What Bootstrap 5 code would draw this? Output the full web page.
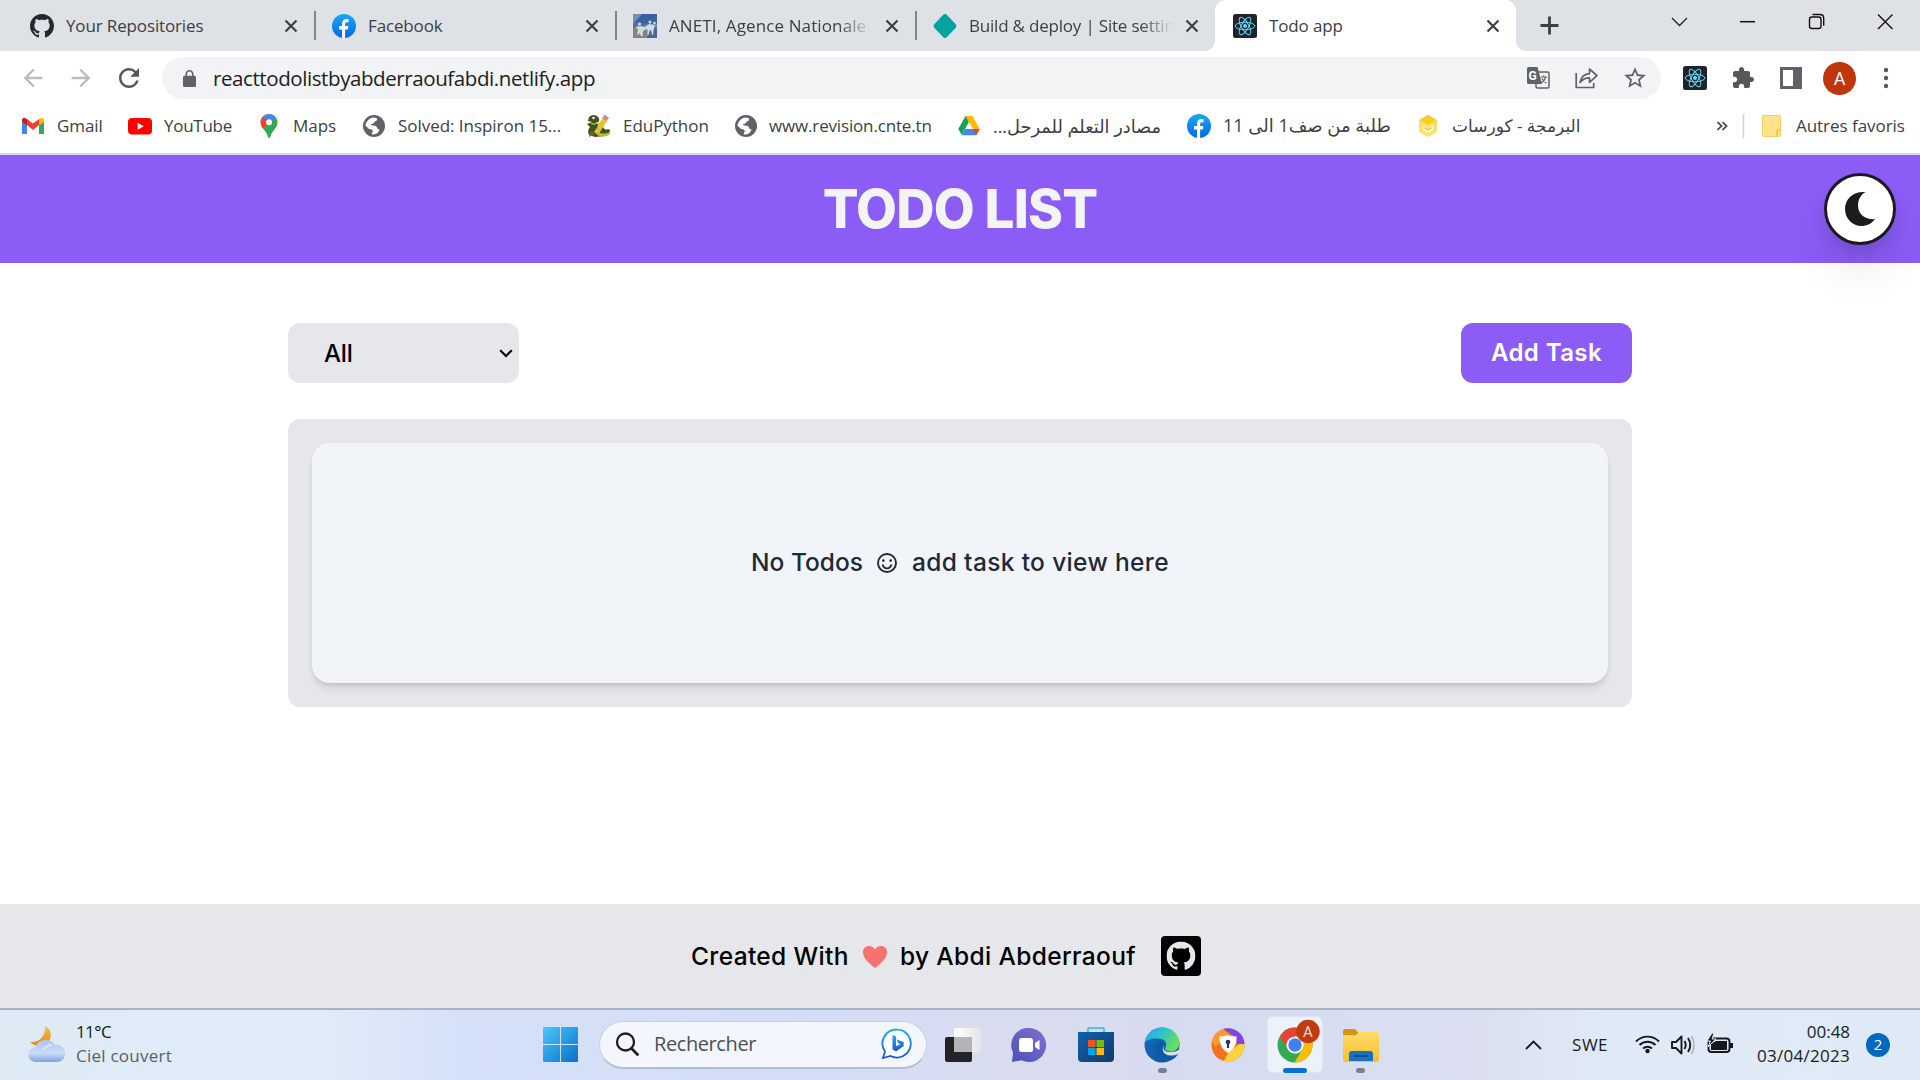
<!DOCTYPE html>
<html lang="en">
<head>
<meta charset="utf-8">
<title>Todo app</title>
<link href="https://cdn.jsdelivr.net/npm/bootstrap@5.3.0/dist/css/bootstrap.min.css" rel="stylesheet">
<style>
body{width:1920px;height:1080px;overflow:hidden;background:#fff;font-family:"Open Sans","DejaVu Sans",sans-serif;color:#3c4043}
svg{display:block;flex:none}
.txt{white-space:nowrap;line-height:1;display:block;flex:none}
/* tab strip */
.tabs{height:51px;background:#dee1e6}
.tab{height:51px;width:301px;padding-left:16px;font-size:17px;flex:none}
.tab .txt{margin-left:12px}
.tab-first{width:316px;padding-left:30px}
.tab-mid{width:300px}
.tab-last{width:298px}
.tab:not(.tab-active):not(.tab-last)::after{content:"";width:2px;height:29px;background:#82868b;flex:none}
.tab-name{flex:none;width:208px}
.tab-name .txt{line-height:1.4;letter-spacing:-.14px}
.tab-x{margin-left:auto;margin-right:16px}
.fade-end{overflow:hidden;width:202px;-webkit-mask-image:linear-gradient(90deg,#000 84%,transparent);mask-image:linear-gradient(90deg,#000 84%,transparent)}
.tab-name .ls-wide{letter-spacing:.12px}
.tab-name .ls-tight{letter-spacing:-.2px;width:204px}
.tab-active{background:#fff;border-radius:11px 11px 0 0;width:301px;padding-left:18px;position:relative}
.tab-active::before,.tab-active::after{content:"";position:absolute;bottom:0;width:10px;height:10px}
.tab-active::before{left:-10px;background:radial-gradient(circle at 0 0,transparent 9.5px,#fff 10px)}
.tab-active::after{right:-10px;background:radial-gradient(circle at 100% 0,transparent 9.5px,#fff 10px)}
.win{width:68.6px;height:44px}
/* toolbar */
.toolbar{height:53px;background:#fff;padding:1px 0 0 9px}
.navbtn{width:48px;flex:none}
.pill{width:1499px;height:42px;border-radius:21px;background:#f1f3f4;margin-left:9px;padding:0 14px 0 21px;flex:none}
.url{font-size:20.5px;color:#202124;margin-left:17px;letter-spacing:-.41px}
.pill-icons{gap:25px}
.tools{padding-left:18px}
.toolic{width:48px;flex:none}
.avatar{width:33px;height:33px;background:#bf360c;color:#fff;font:18px Roboto,sans-serif}
.kebab{margin-left:15px}
/* bookmarks */
.marks{height:49px;padding-left:21px;font-size:17px;padding-bottom:5px}
.mark-item{flex:none;gap:12px;letter-spacing:-.04px}
.w1{width:107px;letter-spacing:-.1px}.w2{width:129px;letter-spacing:-.27px}.w3{width:105px}.w4{width:225px}.w5{width:146px}.w6{width:224px;letter-spacing:-.16px}
.w7{width:230px;font-size:17.8px;letter-spacing:0}.w8{width:229px;font-size:18px;letter-spacing:0}.w9{width:301px;letter-spacing:0}
.mark-item .txt{line-height:1.4}
/* page */
.pagehead{height:110px;background:#8b5cf6;border-top:2px solid #e0d2fb}
.poppy{font-family:Inter,sans-serif}
.title{font-weight:800;font-size:53px;letter-spacing:-.8px;color:#f3f4f6}
.moon{width:72px;height:72px;border:3px solid #1b1a22;background:#fff;right:24px;top:18px;box-shadow:0 30px 46px -6px rgba(0,0,0,.1),0 10px 18px -4px rgba(0,0,0,.13)}
.stage{height:641px;padding:60px 288px 0}
.pick{width:231px;height:60px;border-radius:12px;background:#e5e7eb;color:#000;font-size:24px;font-weight:500;letter-spacing:-.2px;padding:1px 6px 0 36px}
.addbtn,.addbtn:hover{width:171px;height:60px;border-radius:12px;background:#8b5cf6;color:#fff;font-size:24px;font-weight:600;letter-spacing:.4px;border:0}
.board{margin-top:36px;height:288px;border-radius:12px;background:#e5e7eb;padding:24px}
.empty{height:240px;border-radius:18px;background:#f1f4f9;color:#1f2937;font-size:24.500px;font-weight:500;box-shadow:0 6px 9px -2px rgba(0,0,0,.13),0 2px 5px -2px rgba(0,0,0,.1);padding-bottom:1px}
.view-text{letter-spacing:.35px}
.smile{margin:0 15px 0 14px}
.foot{height:106px;background:#e5e7eb;border-bottom:2px solid #a9b3c1;color:#000;font-size:24.500px;font-weight:500;padding-left:691px;letter-spacing:.35px}
.foot-a{width:160px}.foot-b{width:236px}
.heart{margin:2px 13px 0 12px}
.ghbox{margin-left:25px}
/* taskbar */
.taskbar{height:70px;background:linear-gradient(90deg,#deebf5 0,#e0ebf8 17%,#d5e1f8 24%,#d3def6 42%,#dadbee 55%,#d6dcf1 66%,#dbdff0 77%,#e0eaf7 84%,#deebf6 100%);color:#1a1c20;font-size:17px;padding-bottom:1px}
.wx{margin-left:28px}
.wtext{margin-left:8px;width:467px;flex:none;padding-bottom:2px}
.two-line .txt+.txt{margin-top:7px}
.wtext .t-temp{letter-spacing:-.6px}
.wtext .t-sky{color:#5a5f66;letter-spacing:.24px}
.search{width:328px;height:48px;border-radius:24px;background:#f3f7fd;border:1px solid #c6d0e2;border-bottom:2px solid #b3bed1;font-size:20px;color:#4c5057;padding:0 13px 0 15px;margin-left:21px;flex:none}
.search .txt{margin-left:15px;letter-spacing:-.41px}
.apps{margin-left:3px;flex:none}
.app{width:66.300px;height:70px;flex:none;position:relative}
.app .dot{position:absolute;bottom:7px;width:9px;height:5px;border-radius:3px;background:#7d808c}
.tile{width:56px;height:57px;border-radius:6px;background:#edf1fa;border:1px solid #dfe4f1}
.app .dot-on{width:24px;background:#0b70cc}
.up{margin-left:131px}
.t-swe{margin-left:30px;width:36px;letter-spacing:.5px}
.tray{margin-left:27px}
.clock{width:93px;margin-left:22px;padding-bottom:2px;flex:none}
.t-date{letter-spacing:.28px}
.notif{width:24px;height:24px;background:#0467c0;color:#fff;font-size:15px;margin-left:16px;flex:none}
</style>
<script src="https://cdn.jsdelivr.net/npm/bootstrap@5.3.0/dist/js/bootstrap.bundle.min.js"></script>
</head>
<body>
<svg width="0" height="0" class="position-absolute">
<defs>
<linearGradient id="fbg" x2="0" y2="1"><stop stop-color="#18a9fb"/><stop offset="1" stop-color="#0668e1"/></linearGradient>
<linearGradient id="wing" x2="1" y2="1"><stop stop-color="#4cc6f8"/><stop offset="1" stop-color="#0671cc"/></linearGradient>
<linearGradient id="cloud" x2="0" y2="1"><stop stop-color="#a9c5f0"/><stop offset=".6" stop-color="#c9dcf6"/><stop offset="1" stop-color="#7fa4e2"/></linearGradient>
<linearGradient id="sun" x2="0" y2="1"><stop stop-color="#f6c33d"/><stop offset="1" stop-color="#e8842a"/></linearGradient>
<linearGradient id="chat" x1="1" x2="0" y2="1"><stop stop-color="#8a6ad0"/><stop offset=".5" stop-color="#6463c6"/><stop offset="1" stop-color="#4c4fb4"/></linearGradient>
<linearGradient id="store" x2="1" y2="1"><stop stop-color="#0f62ac"/><stop offset="1" stop-color="#123a6c"/></linearGradient>
<linearGradient id="e1" x2="1" y2=".4"><stop stop-color="#2aa6e3"/><stop offset=".5" stop-color="#2cc3cf"/><stop offset="1" stop-color="#6bdc5b"/></linearGradient>
<linearGradient id="e2" x2="1" y2="1"><stop stop-color="#1470c4"/><stop offset="1" stop-color="#0c4f98"/></linearGradient>
<linearGradient id="fold" x2="0" y2="1"><stop stop-color="#ffdc6b"/><stop offset="1" stop-color="#f7bf2c"/></linearGradient>
<linearGradient id="bing" x2="0" y2="1"><stop stop-color="#2aa8ee"/><stop offset="1" stop-color="#1a55c8"/></linearGradient>
<linearGradient id="glass" x2="1"><stop stop-color="#fff"/><stop offset="1" stop-color="#e4e4e6"/></linearGradient>
<symbol id="gh" viewBox="0 0 16 16"><path d="M8 0C3.58 0 0 3.58 0 8c0 3.54 2.29 6.53 5.47 7.59.4.07.55-.17.55-.38 0-.19-.01-.82-.01-1.49-2.01.37-2.53-.49-2.69-.94-.09-.23-.48-.94-.82-1.13-.28-.15-.68-.52-.01-.53.63-.01 1.08.58 1.23.82.72 1.21 1.87.87 2.33.66.07-.52.28-.87.51-1.07-1.78-.2-3.64-.89-3.64-3.95 0-.87.31-1.59.82-2.15-.08-.2-.36-1.02.08-2.12 0 0 .67-.21 2.2.82.64-.18 1.32-.27 2-.27.68 0 1.36.09 2 .27 1.53-1.04 2.2-.82 2.2-.82.44 1.1.16 1.92.08 2.12.51.56.82 1.27.82 2.15 0 3.07-1.87 3.75-3.65 3.95.29.25.54.73.54 1.48 0 1.07-.01 1.93-.01 2.2 0 .21.15.46.55.38A8.012 8.012 0 0 0 16 8c0-4.42-3.58-8-8-8z"/></symbol>
<symbol id="fb" viewBox="0 0 24 24"><circle cx="12" cy="12" r="12" fill="url(#fbg)"/><path d="M10 24v-8.400H7V12h3V9.700C10 6.700 11.800 5 14.500 5c1 0 2 .2 2 .2v3H15c-1.500 0-1.900.9-1.900 1.900V12h3.300l-.6 3.600h-2.700V24z" fill="#fff"/></symbol>
<symbol id="close" viewBox="0 0 14 14"><path d="M1.500 1.500l11 11M12.500 1.500l-11 11" stroke="#3c4043" stroke-width="2.200"/></symbol>
<symbol id="react" viewBox="0 0 24 24"><rect width="24" height="24" rx="2.500" fill="#20232a"/><g fill="none" stroke="#61dafb" stroke-width=".95"><ellipse cx="12" cy="12" rx="9.800" ry="3.700"/><ellipse cx="12" cy="12" rx="9.800" ry="3.700" transform="rotate(60 12 12)"/><ellipse cx="12" cy="12" rx="9.800" ry="3.700" transform="rotate(120 12 12)"/></g><circle cx="12" cy="12" r="2" fill="#61dafb"/></symbol>
<symbol id="globe" viewBox="0 0 24 24"><circle cx="12" cy="12" r="11" fill="#5f6368"/><path d="M3.500 12C4 7.500 7 4 11.500 3.500L15 4.300c.3 2-.6 3.200-2.500 3.500-.6 1.600-1.800 2.300-3.500 2.300-.4 1.300 1 1.600 3.500 1.700 2 .2 2.800 1.500 2.500 2.700 2.300.4 3 1.300 2 2.500-1.500 2.600-4.300 4-7 3.500-.5-1.400.2-2.300 1-3-.3-1.700-1.500-2.200-3-2.200C6 14.800 5.500 12.600 3.500 12z" fill="#fff"/></symbol>
</defs>
</svg>

<header>
<div class="tabs d-flex">
  <div class="tab tab-first d-flex align-items-center">
    <svg width="24" height="24" fill="#24292f"><use href="#gh"/></svg>
    <div class="tab-name"><span class="txt">Your Repositories</span></div>
    <svg width="14" height="14" class="tab-x"><use href="#close"/></svg>
  </div>
  <div class="tab d-flex align-items-center">
    <svg width="24" height="24"><use href="#fb"/></svg>
    <div class="tab-name"><span class="txt">Facebook</span></div>
    <svg width="14" height="14" class="tab-x"><use href="#close"/></svg>
  </div>
  <div class="tab tab-mid d-flex align-items-center">
    <svg width="24" height="24"><rect width="24" height="24" fill="#4d6f9f"/><path d="M0 0h24v10L0 8z" fill="#3b62a0"/><path d="M0 0h9L0 10z" fill="#7590b4"/><path d="M0 24V14l5-3 4 3 5-4 4 3 6-4v15z" fill="#85857c"/><path d="M14 24l2-8 8-3v11z" fill="#4a6797"/><g fill="#cfdbe6"><circle cx="6.500" cy="10" r="1.600"/><circle cx="17" cy="8" r="1.500"/><circle cx="21.500" cy="9" r="1.300"/><path d="M3 13l5-1 4 1 4-3 6 1-1 3-1 7h-1l-1-5-1.500 1-1 4h-1l0-6-3.500 1-1.500 3 .5 3H8l-1.500-3L5 21H4l1-5z"/></g></svg>
    <div class="tab-name"><span class="txt fade-end ls-wide">ANETI, Agence Nationale</span></div>
    <svg width="14" height="14" class="tab-x"><use href="#close"/></svg>
  </div>
  <div class="tab tab-last d-flex align-items-center">
    <svg width="24" height="24"><path d="M12 0c1 0 1.500.5 2.200 1.300l8.600 9c.7.900.7 2.500 0 3.400l-8.600 9c-1.200 1.600-3.200 1.600-4.400 0l-8.600-9c-.7-.9-.7-2.500 0-3.400l8.600-9C10.500.5 11 0 12 0z" fill="#05a3a0"/></svg>
    <div class="tab-name"><span class="txt fade-end ls-tight">Build &amp; deploy | Site settin</span></div>
    <svg width="14" height="14" class="tab-x"><use href="#close"/></svg>
  </div>
  <div class="tab tab-active d-flex align-items-center">
    <svg width="24" height="24"><use href="#react"/></svg>
    <div class="tab-name"><span class="txt">Todo app</span></div>
    <svg width="14" height="14" class="tab-x me-3"><use href="#close"/></svg>
  </div>
  <svg width="66" height="51"><path d="M24.500 25.500h18M33.500 16.500v18" stroke="#3c4043" stroke-width="2.800"/></svg>
  <div class="d-flex ms-auto">
    <svg class="win"><path d="M26 18l7.500 7.500L41 18" fill="none" stroke="#222" stroke-width="1.300"/></svg>
    <svg class="win"><path d="M26 21.700h15" stroke="#111" stroke-width="1.500"/></svg>
    <svg class="win"><rect x="26.500" y="17" width="11.500" height="11.500" rx="2.300" fill="none" stroke="#111" stroke-width="1.400"/><path d="M29.500 14.500H37q3.700 0 3.700 3.700v7.500" fill="none" stroke="#111" stroke-width="1.400"/></svg>
    <svg class="win"><path d="M27 14.500l14.500 14.500M41.500 14.500L27 29" stroke="#111" stroke-width="1.400"/></svg>
  </div>
</div>

<div class="toolbar d-flex align-items-center">
  <div class="navbtn d-flex justify-content-center"><svg width="28" height="28" viewBox="0 0 24 24" fill="#b9bbbe"><path d="M20 11H7.830l5.590-5.590L12 4l-8 8 8 8 1.410-1.410L7.830 13H20v-2z"/></svg></div>
  <div class="navbtn d-flex justify-content-center"><svg width="28" height="28" viewBox="0 0 24 24" fill="#b9bbbe"><path d="M4 11h12.170l-5.590-5.590L12 4l8 8-8 8-1.410-1.410L16.170 13H4z"/></svg></div>
  <div class="navbtn d-flex justify-content-center"><svg width="30" height="30" viewBox="0 0 24 24" fill="#54585d"><path d="M17.650 6.350A7.958 7.958 0 0 0 12 4c-4.420 0-7.990 3.580-7.990 8s3.570 8 7.990 8c3.730 0 6.840-2.550 7.730-6h-2.080A5.990 5.990 0 0 1 12 18c-3.310 0-6-2.690-6-6s2.690-6 6-6c1.660 0 3.140.69 4.220 1.780L13 11h7V4l-2.350 2.350z"/></svg></div>
  <div class="pill d-flex align-items-center">
    <svg width="13" height="17" viewBox="4 1 16 21" preserveAspectRatio="none" fill="#5f6368"><path d="M18 8h-1V6c0-2.760-2.240-5-5-5S7 3.240 7 6v2H6c-1.100 0-2 .9-2 2v10c0 1.100.9 2 2 2h12c1.100 0 2-.9 2-2V10c0-1.100-.9-2-2-2zM9 6c0-1.660 1.340-3 3-3s3 1.340 3 3v2H9V6z"/></svg>
    <span class="txt url">reacttodolistbyabderraoufabdi.netlify.app</span>
    <div class="pill-icons d-flex align-items-center ms-auto">
      <svg width="23" height="22" class="overflow-visible"><rect x="10" y="5" width="13" height="16" rx="1.500" fill="none" stroke="#5f6368" stroke-width="1.500"/><path d="M2.500 0h9l4.500 17H2.500Q1 17 1 15.500v-14Q1 0 2.500 0z" fill="#5f6368"/><text x="2.500" y="12.500" font-family="Roboto" font-weight="700" font-size="12" fill="#fff">G</text><path d="M14.500 10h6.500M17.700 8.500V10M19.700 10q-1 4-4.500 6M16 11.500q1.500 3 4.500 4.500" stroke="#5f6368" stroke-width="1.200" fill="none"/></svg>
      <svg width="24" height="22" class="overflow-visible"><path d="M2.200 6v14.500h17.500V16M6 15.500C7 10 10.500 7 15.500 6.600V2l7.500 6.700-7.500 6.600v-4.400c-4 0-7 1.300-9.500 4.600z" fill="none" stroke="#5f6368" stroke-width="1.700" stroke-linejoin="round"/></svg>
      <svg width="24" height="26" viewBox="1 0 22 24" fill="#5f6368"><path d="M22 9.240l-7.190-.62L12 2 9.190 8.630 2 9.240l5.460 4.730L5.820 21 12 17.270 18.180 21l-1.630-7.030L22 9.240zM12 15.400l-3.760 2.270 1-4.280-3.320-2.880 4.380-.38L12 6.100l1.710 4.040 4.380.38-3.320 2.880 1 4.280L12 15.400z"/></svg>
    </div>
  </div>
  <div class="tools d-flex align-items-center">
    <div class="toolic d-flex"><svg width="24" height="24" class="ms-1"><use href="#react"/></svg></div>
    <div class="toolic d-flex"><svg width="24" height="24" viewBox="0 0 24 24" fill="#54585d" class="ms-1"><path d="M20.500 11H19V7c0-1.100-.9-2-2-2h-4V3.500C13 2.120 11.880 1 10.500 1S8 2.120 8 3.500V5H4c-1.100 0-1.990.9-1.990 2v3.800H3.500c1.490 0 2.700 1.210 2.700 2.700s-1.210 2.700-2.700 2.700H2V20c0 1.100.9 2 2 2h3.800v-1.500c0-1.490 1.210-2.700 2.700-2.700 1.490 0 2.700 1.210 2.700 2.700V22H17c1.100 0 2-.9 2-2v-4h1.500c1.380 0 2.500-1.120 2.500-2.500S21.880 11 20.500 11z"/></svg></div>
    <div class="toolic d-flex"><svg width="22" height="22" class="ms-1 overflow-visible"><path d="M2.500 1.500h19v19h-19z" fill="none" stroke="#5f6368" stroke-width="3"/><path d="M14 1h8v20h-8z" fill="#5f6368"/></svg></div>
    <div class="avatar rounded-circle d-flex align-items-center justify-content-center flex-shrink-0">A</div>
    <svg width="34" height="24" class="kebab"><g fill="#54585d"><circle cx="15" cy="4" r="2.200"/><circle cx="15" cy="12" r="2.200"/><circle cx="15" cy="20" r="2.200"/></g></svg>
  </div>
</div>

<div class="marks d-flex align-items-center">
  <div class="mark-item w1 d-flex align-items-center"><svg width="24" height="24"><path d="M1 20V6l5 4v10z" fill="#4285f4"/><path d="M18 20V10l5-4v14z" fill="#34a853"/><path d="M6 11V5l6 4.500L18 5v6l-6 5z" fill="#ea4335"/><path d="M1 8V6c0-2 2-3 3.500-1.800L6 5v6.500z" fill="#c5221f"/><path d="M23 8V6c0-2-2-3-3.500-1.800L18 5v6.500z" fill="#fbbc04"/></svg><span class="txt">Gmail</span></div>
  <div class="mark-item w2 d-flex align-items-center"><svg width="24" height="24"><rect y="4" width="24" height="16.500" rx="4" fill="#f00"/><path d="M9.700 8.700v7l6-3.500z" fill="#fff"/></svg><span class="txt">YouTube</span></div>
  <div class="mark-item w3 d-flex align-items-center"><svg width="24" height="24"><clipPath id="pin"><path d="M12 0c4.700 0 8.300 3.600 8.300 8.300 0 3.200-1.300 5-3.300 7.400-2 2.300-3.100 4-3.700 6.700-.3 1.700-2.300 1.700-2.600 0-.6-2.700-1.700-4.400-3.700-6.700C5 13.300 3.700 11.500 3.700 8.300 3.700 3.600 7.300 0 12 0z"/></clipPath><g clip-path="url(#pin)"><path d="M0 0h24v24H0z" fill="#34a853"/><path d="M3 17l9-8 7-8V0H3z" fill="#fbbc04"/><path d="M2 6l5-5 6 6-7 8-4-2z" fill="#ea4335"/><path d="M6 3l3-4 12 2-8 8z" fill="#4285f4"/><path d="M12 24V14l9-10v20z" fill="#34a853"/></g><circle cx="12" cy="8.300" r="3" fill="#fff"/></svg><span class="txt">Maps</span></div>
  <div class="mark-item w4 d-flex align-items-center"><svg width="24" height="24"><use href="#globe"/></svg><span class="txt">Solved: Inspiron 15...</span></div>
  <div class="mark-item w5 d-flex align-items-center"><svg width="24" height="24"><path d="M2 3q3-3 7-1.500Q13 3 12 7l-3 3q5-1 7 3 2 4 5 2l2 1-1 4-4 2-10 1-6-2q-2-5 1-8l-3-3 5-2-4-1z" fill="#40541c"/><path d="M6 17L16 4l4 3-9 14z" fill="#e8c52c"/><path d="M15 4l2.500-3.500L22 4l-2.500 3z" fill="#d9898d"/><path d="M2 23l2-6 4 3z" fill="#8a5a2c"/><path d="M11 18q5 3 12 0l-1 3q-6 3-12 0z" fill="#b8be34"/><path d="M4 9q4 3 6-1M9 13l3 3" stroke="#a7c048" stroke-width="1.500" fill="none"/><path d="M8 10l3 2-4 6-2-2z" fill="#40541c"/><circle cx="6.500" cy="4" r="1.200" fill="#fff"/></svg><span class="txt">EduPython</span></div>
  <div class="mark-item w6 d-flex align-items-center"><svg width="24" height="24" class="overflow-visible"><use href="#globe" x="1"/></svg><span class="txt">www.revision.cnte.tn</span></div>
  <div class="mark-item w7 d-flex align-items-center"><svg width="24" height="24"><path d="M8.500 2h7L8.500 14.500 4.800 21 1.300 15z" fill="#18a05d"/><path d="M8.500 2h7l7.200 13h-7.200z" fill="#fbbc04"/><path d="M8.300 15h14.400l-3.500 6.300H4.800z" fill="#4285f4"/><path d="M15.700 15h7l-3.500 6.300z" fill="#ea4335"/><path d="M12 8l4 7H8z" fill="#fff"/></svg><span class="txt" dir="rtl">مصادر التعلم للمرحل...</span></div>
  <div class="mark-item w8 d-flex align-items-center"><svg width="24" height="24"><use href="#fb"/></svg><span class="txt" dir="rtl">طلبة من صف1 الى 11</span></div>
  <div class="mark-item w9 d-flex align-items-center"><svg width="24" height="24"><path d="M12 1l9 5v12l-9 5-9-5V6z" fill="#fbe06a"/><path d="M12 1l9 5-9 5-9-5z" fill="#f9cb28"/><path d="M7 11l5 3 5-3v5l-5 3-5-3z" fill="#fffbe4"/><path d="M8.500 13.500L12 16l3.500-2.500" stroke="#f5c932" stroke-width="1.800" fill="none"/></svg><span class="txt" dir="rtl">البرمجة - كورسات</span></div>
  <svg width="43" height="24"><path d="M.5 8l4 4-4 4M5.500 8l4 4-4 4" fill="none" stroke="#3c4043" stroke-width="1.700"/><path d="M26.500 0v24" stroke="#cfd1d4" stroke-width="1.500"/></svg>
  <div class="mark-item d-flex align-items-center"><svg width="24" height="24"><path d="M4 1.500h15q1.500 0 1.500 1.500v18q0 1.500-1.500 1.500H4Q2.500 22.500 2.500 21V3q0-1.500 1.500-1.500z" fill="#ffe28a" stroke="#f3cf62"/><path d="M17 22v-5q0-1 1-1h2.500" fill="none" stroke="#e9bb3c" stroke-width="1.200"/></svg><span class="txt">Autres favoris</span></div>
</div>
</header>

<main class="poppy">
<div class="pagehead d-flex align-items-center justify-content-center position-relative">
  <h1 class="txt title m-0">TODO LIST</h1>
  <div class="moon rounded-circle position-absolute d-flex align-items-center justify-content-center"><svg width="32" height="36"><path d="M21.500 1C9 0 1 8 1 18s8 17 16 17c6 0 11-2.500 14-7-8 1-17-3.500-17-13.500C14 8.500 17 3.500 21.500 1z" fill="#1b1c1e"/></svg></div>
</div>
<div class="stage">
  <div class="d-flex justify-content-between">
    <div class="pick d-flex align-items-center justify-content-between"><span class="txt">All</span><svg width="14" height="9"><path d="M1.200 1.200L7 7l5.800-5.800" fill="none" stroke="#000" stroke-width="2.200"/></svg></div>
    <button class="btn addbtn d-flex align-items-center justify-content-center p-0"><span class="txt">Add Task</span></button>
  </div>
  <div class="board"><div class="empty d-flex align-items-center justify-content-center">
    <span class="txt">No Todos</span>
    <svg width="20" height="20" class="smile"><circle cx="10" cy="10" r="9" fill="none" stroke="#1f2937" stroke-width="1.900"/><circle cx="6.300" cy="7.600" r="1.300" fill="#1f2937"/><circle cx="13.700" cy="7.600" r="1.300" fill="#1f2937"/><path d="M5.500 11.500q1 3.800 4.500 3.800t4.500-3.800" fill="none" stroke="#1f2937" stroke-width="1.800"/></svg>
    <span class="txt view-text">add task to view here</span>
  </div></div>
</div>
<footer class="foot d-flex align-items-center">
  <span class="txt foot-a">Created With</span>
  <svg width="24" height="24" class="heart"><path d="M12 23C5 17.500 0 13 0 7 0 3.500 2.500 1 6 1c2.500 0 4.800 1.300 6 3.500C13.200 2.300 15.500 1 18 1c3.500 0 6 2.500 6 6 0 6-5 10.500-12 16z" fill="#f87171"/></svg>
  <span class="txt foot-b">by Abdi Abderraouf</span>
  <svg width="40" height="40" class="ghbox"><rect width="40" height="40" rx="4" fill="#000"/><use href="#gh" x="5.500" y="5.500" width="29" height="29" fill="#e5e7eb"/></svg>
</footer>
</main>

<div class="taskbar d-flex align-items-center">
  <svg width="40" height="40" class="wx"><path d="M17 1c7 3 8 12 2 17-5 4-12 4-17-1 8 1 16-5 15-16z" fill="url(#sun)"/><path d="M8 37a7.500 7.500 0 0 1-.5-15A11 11 0 0 1 27 20a8.500 8.500 0 0 1 3 17z" fill="url(#cloud)"/><path d="M16 25q2-5 8-5" stroke="#e3eefc" stroke-width="1.500" fill="none"/></svg>
  <div class="wtext two-line"><span class="txt t-temp">11°C</span><span class="txt t-sky">Ciel couvert</span></div>
  <svg width="35" height="36"><path d="M1 0h16v17H0V1q0-1 1-1zM18 0h16q1 0 1 1v16H18zM0 18h17v17H1q-1 0-1-1zM18 18h17v16q0 1-1 1H18z" fill="url(#wing)"/></svg>
  <div class="search d-flex align-items-center">
    <svg width="24" height="24"><circle cx="10.500" cy="10" r="8.500" fill="none" stroke="#1d1d1f" stroke-width="2.300"/><path d="M16.500 16.500l6 6" stroke="#1d1d1f" stroke-width="2.800" stroke-linecap="round"/></svg>
    <span class="txt">Rechercher</span>
    <svg width="32" height="32" class="ms-auto"><path d="M16 1.500a14 14 0 1 1-6.500 26.500L2 30l2-6.500A14 14 0 0 1 16 1.500z" fill="#f7fbff" stroke="url(#bing)" stroke-width="1.800"/><path d="M11.500 7l3.500 1.300v10l4.500-2-2.500-1.300-1.300-3.500 7 2.600v3.800L15 23.500l-3.500-2.200z" fill="url(#bing)"/></svg>
  </div>
  <div class="apps d-flex align-items-center">
    <div class="app d-flex align-items-center justify-content-center"><svg width="36" height="36"><rect x="0" y="10" width="27" height="25" rx="2" fill="#242426"/><rect x="9" y="1" width="27" height="24" rx="2" fill="url(#glass)"/><path d="M9 10h18v15H9z" fill="#b4b4b6"/></svg></div>
    <div class="app d-flex align-items-center justify-content-center"><svg width="36" height="36"><path d="M18 1a17 17 0 1 1-7.500 32.200L1 35l1-9.500A17 17 0 0 1 18 1z" fill="url(#chat)"/><rect x="8" y="11" width="14" height="14" rx="2.500" fill="#fff"/><path d="M24 16l4.500-3v10L24 20z" fill="#fff"/></svg></div>
    <div class="app d-flex align-items-center justify-content-center"><svg width="36" height="36"><path d="M10 7V2q0-1 1-1h14q1 0 1 1v5" fill="none" stroke="#4ec3ef" stroke-width="2.200"/><path d="M0 5h36v26q0 4-4 4H4q-4 0-4-4z" fill="url(#store)"/><path d="M10 13h7.500v7H10z" fill="#f25022"/><path d="M18.500 13H26v7h-7.500z" fill="#7fba00"/><path d="M10 21h7.500v7H10z" fill="#00a4ef"/><path d="M18.500 21H26v7h-7.500z" fill="#ffb900"/></svg></div>
    <div class="app d-flex align-items-center justify-content-center"><svg width="36" height="36"><circle cx="18" cy="18" r="17.500" fill="url(#e2)"/><path d="M1 15C3 6 10 .5 18 .5 28 .5 35.500 8 35.500 16c0 5-4 8.500-9 8.500-4 0-6.500-2-5-4.500 2-3 0-8-7-8.500C8 11 3 13 1 15z" fill="url(#e1)"/><path d="M11 20c0 9 6 15 13 14 5-1 9-4 10.500-8-5 3-12 2-14.500-2-1.500-2.500-1-6 1-8-5-2-10-.5-10 4z" fill="#0f5aa8"/><path d="M20.500 16.500c-3 5 0 8.500 5 8.500 4 0 7.500-.5 9-2.200l2 4.200-3 3c.5-1.500 1-2 .5-3-6 3-13.500 1.500-15-3-.6-3 .1-5.500 1.500-7.500z" fill="#d6dcf1"/></svg><i class="dot"></i></div>
    <div class="app d-flex align-items-center justify-content-center"><svg width="34" height="36"><circle cx="17" cy="18" r="16.500" fill="#f4701f"/><path d="M12 2a16.500 16.500 0 0 1 21.500 15l-6 5-3-12z" fill="#7b45e8"/><path d="M33.500 17A16.500 16.500 0 0 1 13 34l4-8 11-9z" fill="#fdd33c"/><path d="M1 14Q3 5 12 2l6 5L4 20z" fill="#ff9a2a"/><path d="M17 8q4.500 1.500 8.500 1.500c.5 7.500-2.500 13-8.500 16.500-6-3.500-9-9-8.500-16.500Q12.500 9.500 17 8z" fill="#fff"/><circle cx="17" cy="15" r="2.300" fill="#2b2f6b"/><path d="M16.200 15h1.600l.4 6h-2.400z" fill="#2b2f6b"/></svg></div>
    <div class="app d-flex align-items-center justify-content-center"><div class="tile d-flex align-items-center justify-content-center"><svg width="50" height="50" class="overflow-visible"><g transform="translate(25 25)"><circle r="17.500" fill="#34a853"/><path d="M-15.200-8.700A17.500 17.500 0 0 1 15.200-8.700H0L-7.500 4z" fill="#ea4335"/><path d="M15.200-8.700A17.500 17.500 0 0 1-.5 17.500L7.500 4 0-8.700z" fill="#fbbc04"/><circle r="8.600" fill="#fff"/><circle r="6.700" fill="#3f83f1"/></g><circle cx="38" cy="11.500" r="11.700" fill="#c23a12"/><text x="38" y="17" text-anchor="middle" font-family="Roboto" font-size="15" fill="#f6dcd2">A</text></svg></div><i class="dot dot-on"></i></div>
    <div class="app d-flex align-items-center justify-content-center"><svg width="36" height="36"><path d="M0 12V4q0-2 2-2h9q1.500 0 2.500 1.500L16 6v8H0z" fill="#d9930f"/><path d="M0 8h13l3-3h18q2 0 2 2v26q0 2-2 2H2q-2 0-2-2z" fill="url(#fold)"/><path d="M6 34V27q0-3 3-3h18q3 0 3 3v7z" fill="#1572c4"/><path d="M11 29h14" stroke="#0b4c90" stroke-width="2"/></svg><i class="dot"></i></div>
  </div>
  <svg width="17" height="10" class="up"><path d="M1 9l7.500-7.500L16 9" fill="none" stroke="#1a1c20" stroke-width="1.900"/></svg>
  <span class="txt t-swe">SWE</span>
  <svg width="100" height="26" class="tray overflow-visible"><g fill="none" stroke="#16181c" stroke-width="1.900"><path d="M1 9.500a16 16 0 0 1 23 0M4.500 13a11.500 11.500 0 0 1 16 0M8 16.500a6.500 6.500 0 0 1 9 0"/><path d="M37 10h4l5.500-5.500v17L41 16h-4zM49.500 9q2.500 4 0 8M53 6q4.500 7 0 14" stroke-linejoin="round"/><path d="M56.500 4q5 9 0 18" stroke="#b5bcc6"/><rect x="73.500" y="6.500" width="21" height="13.500" rx="3"/></g><circle cx="12.500" cy="19" r="2.200" fill="#16181c"/><path d="M76 12l5-3h11v9H76z" fill="#16181c"/><path d="M95 11h3v5h-3z" fill="#16181c"/><path d="M77 1l-5 8h3.500L73 15l8-8h-4l2-6z" fill="#16181c" stroke="#deebf6"/></svg>
  <div class="clock two-line d-flex flex-column align-items-end"><span class="txt">00:48</span><span class="txt t-date">03/04/2023</span></div>
  <div class="notif rounded-circle d-flex align-items-center justify-content-center">2</div>
</div>
</body>
</html>
